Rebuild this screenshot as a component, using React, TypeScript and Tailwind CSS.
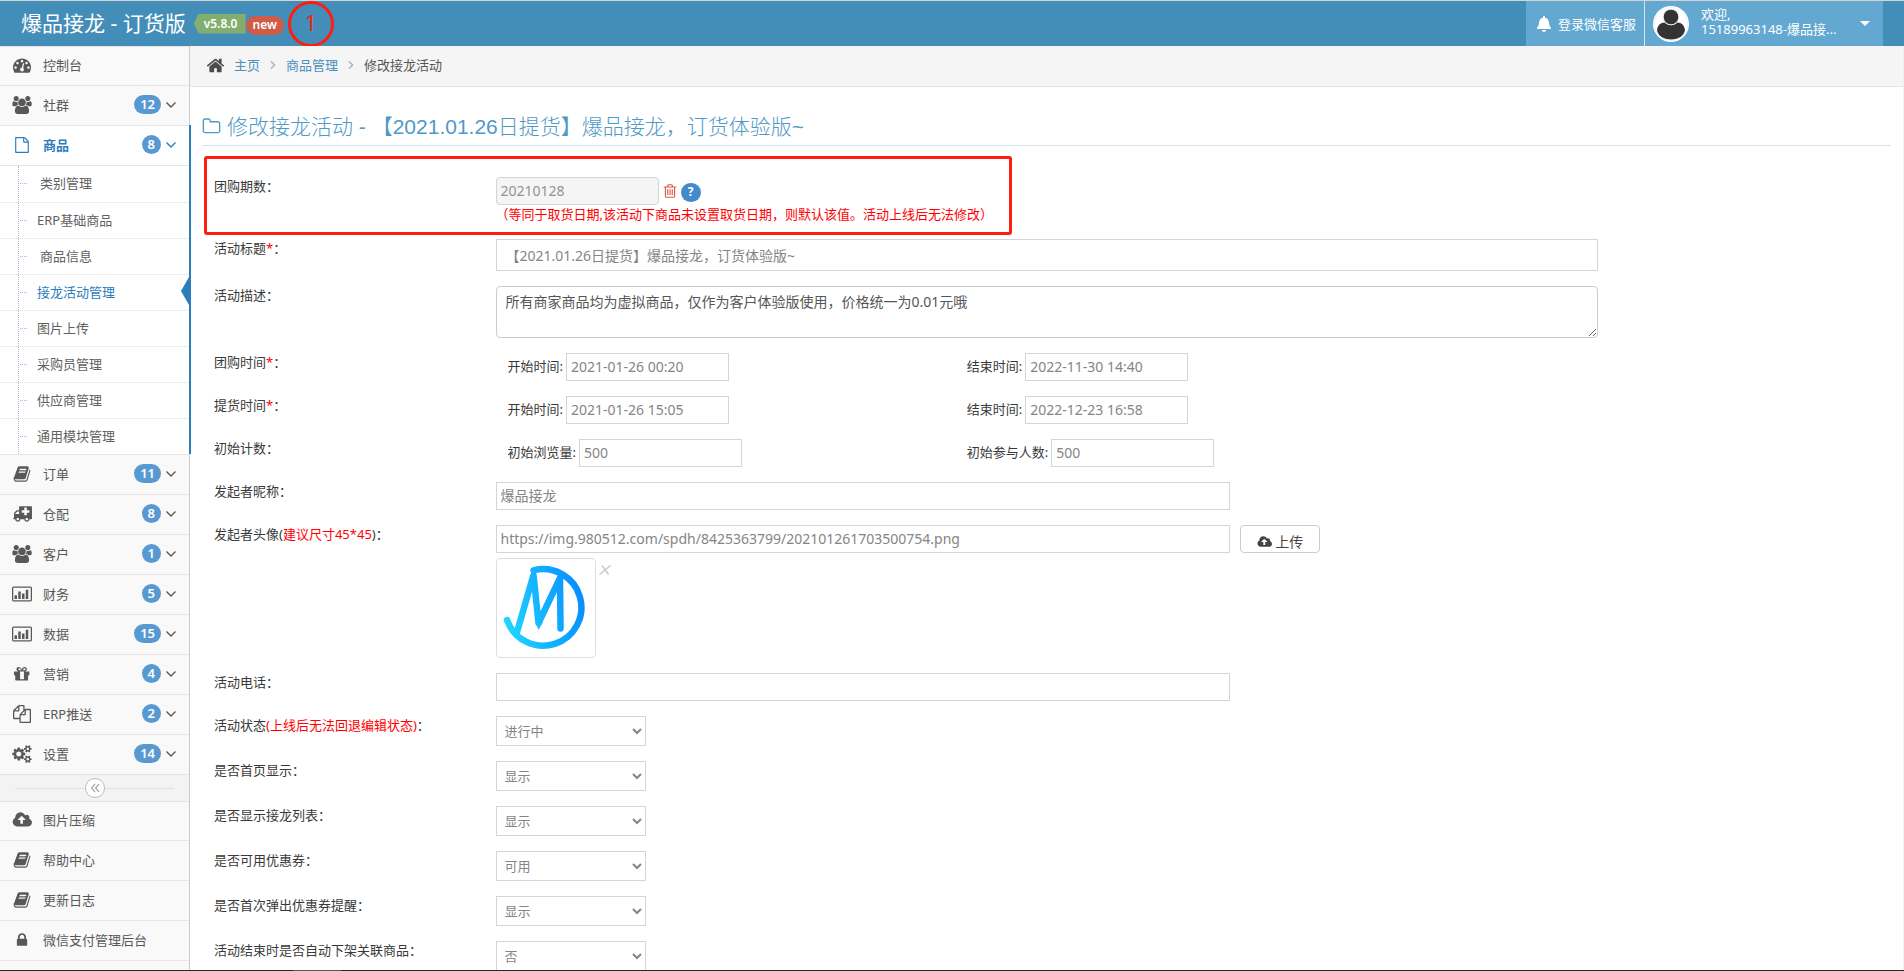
import React from 'react';
import { FaBell } from 'react-icons/fa';

// Font Awesome 4 outlines, all drawn on a 1792 unit em
const ICONS = {
  dashboard: 'M384 1152q0-53-37.5-90.5t-90.5-37.5-90.5 37.5-37.5 90.5 37.5 90.5 90.5 37.5 90.5-37.5 37.5-90.5zm192-448q0-53-37.5-90.5t-90.5-37.5-90.5 37.5-37.5 90.5 37.5 90.5 90.5 37.5 90.5-37.5 37.5-90.5zm428 481l101-382q6-26-7.5-48.5t-38.5-29.5-48 6.5-30 39.5l-101 382q-60 5-107 43.5t-63 98.5q-20 77 20 146t117 89 146-20 89-117q16-60-6-117t-72-91zm660-33q0-53-37.5-90.5t-90.5-37.5-90.5 37.5-37.5 90.5 37.5 90.5 90.5 37.5 90.5-37.5 37.5-90.5zm-640-640q0-53-37.5-90.5t-90.5-37.5-90.5 37.5-37.5 90.5 37.5 90.5 90.5 37.5 90.5-37.5 37.5-90.5zm448 192q0-53-37.5-90.5t-90.5-37.5-90.5 37.5-37.5 90.5 37.5 90.5 90.5 37.5 90.5-37.5 37.5-90.5zm320 448q0 261-141 483-19 29-54 29h-1402q-35 0-54-29-141-221-141-483 0-182 71-348t191-286 286-191 348-71 348 71 286 191 191 286 71 348z',
  group: 'M593 896q-162 5-265 128h-134q-82 0-138-40.5t-56-118.5q0-353 124-353 6 0 43.5 21t97.5 42.5 119 21.5q67 0 133-23-5 37-5 66 0 159 93 256zm1071 637q0 120-73 189.5t-194 69.5h-874q-121 0-194-69.5t-73-189.5q0-53 3.5-103.5t14-109 26.5-108.5 43-97.5 62-81 85.5-53.5 111.5-20q10 0 43 21.5t73 48 107 48 135 21.5 135-21.5 107-48 73-48 43-21.5q61 0 111.5 20t85.5 53.5 62 81 43 97.5 26.5 108.5 14 109 3.5 103.5zm-1024-1277q0 106-75 181t-181 75-181-75-75-181 75-181 181-75 181 75 75 181zm704 384q0 159-112.5 271.5t-271.5 112.5-271.5-112.5-112.5-271.5 112.5-271.5 271.5-112.5 271.5 112.5 112.5 271.5zm576 225q0 78-56 118.5t-138 40.5h-134q-103-123-265-128 93-97 93-256 0-29-5-66 66 23 133 23 59 0 119-21.5t97.5-42.5 43.5-21q124 0 124 353zm-128-609q0 106-75 181t-181 75-181-75-75-181 75-181 181-75 181 75 75 181z',
  file: 'M1596 380q28 28 48 76t20 88v1152q0 40-28 68t-68 28h-1344q-40 0-68-28t-28-68v-1600q0-40 28-68t68-28h896q40 0 88 20t76 48zm-444-244v376h376q-10-29-22-41l-313-313q-12-12-41-22zm384 1528v-1024h-416q-40 0-68-28t-28-68v-416h-768v1536h1280z',
  book: 'M1639 478q40 57 18 129l-275 906q-19 64-76.5 107.5t-122.5 43.5h-923q-77 0-148.5-53.5t-99.5-131.5q-24-67-2-127 0-4 3-27t4-37q1-8-3-21.5t-3-19.5q2-11 8-21t16.5-23.5 16.5-23.5q23-38 45-91.5t30-91.5q3-10 .5-30t-.5-28q3-11 17-28t17-23q21-36 42-92t25-90q1-9-2.5-32t.5-28q4-13 22-30.5t22-22.5q19-26 42.5-84.5t27.5-96.5q1-8-3-25.5t-2-26.5q2-8 9-18t18-23 17-21q8-12 16.5-30.5t15-35 16-36 19.5-32 26.5-23.5 36-11.5 47.5 5.5l-1 3q38-9 51-9h761q74 0 114 56t18 130l-274 906q-36 119-71.5 153.5t-128.5 34.5h-869q-27 0-38 15-11 16-1 43 24 70 144 70h923q29 0 56-15.5t35-41.5l300-987q7-22 5-57 38 15 59 43zm-1064 2q-4 13 2 22.5t20 9.5h608q13 0 25.5-9.5t16.5-22.5l21-64q4-13-2-22.5t-20-9.5h-608q-13 0-25.5 9.5t-16.5 22.5zm-83 256q-4 13 2 22.5t20 9.5h608q13 0 25.5-9.5t16.5-22.5l21-64q4-13-2-22.5t-20-9.5h-608q-13 0-25.5 9.5t-16.5 22.5z',
  ambulance: 'M704 1408q0-52-38-90t-90-38-90 38-38 90 38 90 90 38 90-38 38-90zm-384-512h384v-256h-158q-14 2-22 9l-195 195q-7 12-9 22v30zm1280 512q0-52-38-90t-90-38-90 38-38 90 38 90 90 38 90-38 38-90zm128-672v-192q0-14-9-23t-23-9h-224v-224q0-14-9-23t-23-9h-192q-14 0-23 9t-9 23v224h-224q-14 0-23 9t-9 23v192q0 14 9 23t23 9h224v224q0 14 9 23t23 9h192q14 0 23-9t9-23v-224h224q14 0 23-9t9-23zm256-480v1088q0 26-19 45t-45 19h-192q0 106-75 181t-181 75-181-75-75-181h-384q0 106-75 181t-181 75-181-75-75-181h-128q-26 0-45-19t-19-45 19-45 45-19v-416q0-26 13-58t32-51l198-198q19-19 51-32t58-13h160v-320q0-26 19-45t45-19h1152q26 0 45 19t19 45z',
  chart: 'M160 128h1728q66 0 113 47t47 113v1216q0 66-47 113t-113 47h-1728q-66 0-113-47t-47-113v-1216q0-66 47-113t113-47zm0 128q-32 0-32 32v1216q0 32 32 32h1728q32 0 32-32v-1216q0-32-32-32zM256 1024h256v384h-256zM640 640h256v768h-256zM1024 832h256v576h-256zM1408 448h256v960h-256z',
  gift: 'M1088 1356v-716h-384v716q0 25 18 38.5t46 13.5h256q28 0 46-13.5t18-38.5zm-456-844h195l-126-161q-26-31-69-31-40 0-68 28t-28 68 28 68 68 28zm624-96q0-40-28-68t-68-28q-43 0-69 31l-125 161h194q40 0 68-28t28-68zm376 256v320q0 14-9 23t-23 9h-96v416q0 40-28 68t-68 28h-1088q-40 0-68-28t-28-68v-416h-96q-14 0-23-9t-9-23v-320q0-14 9-23t23-9h440q-93 0-158.5-65.5t-65.5-158.5 65.5-158.5 158.5-65.5q107 0 168 77l128 165 128-165q61-77 168-77 93 0 158.5 65.5t65.5 158.5-65.5 158.5-158.5 65.5h440q14 0 23 9t9 23z',
  copy: 'M1696 384q40 0 68 28t28 68v1216q0 40-28 68t-68 28h-960q-40 0-68-28t-28-68v-288h-544q-40 0-68-28t-28-68v-672q0-40 20-88t48-76l408-408q28-28 76-48t88-20h416q40 0 68 28t28 68v328q68-40 128-40h416zm-544 213l-299 299h299v-299zm-640-384l-299 299h299v-299zm196 647l316-316v-416h-384v416q0 40-28 68t-68 28h-416v640h512v-256q0-40 20-88t48-76zm956 804v-1152h-384v416q0 40-28 68t-68 28h-416v640h896z',
  cogs: 'M896 896q0-106-75-181t-181-75-181 75-75 181 75 181 181 75 181-75 75-181zm768 512q0-52-38-90t-90-38-90 38-38 90q0 53 37.5 90.5t90.5 37.5 90.5-37.5 37.5-90.5zm0-1024q0-52-38-90t-90-38-90 38-38 90q0 53 37.5 90.5t90.5 37.5 90.5-37.5 37.5-90.5zm-384 421v185q0 10-7 19.5t-16 10.5l-155 24q-11 35-32 76 34 48 90 115 7 11 7 20 0 12-7 19-23 30-82.5 89.5t-78.5 59.5q-11 0-21-7l-115-90q-37 19-77 31-11 108-23 155-7 24-30 24h-186q-11 0-20-7.5t-10-17.5l-23-153q-34-10-75-31l-118 89q-7 7-20 7-11 0-21-8-144-133-144-160 0-9 7-19 10-14 41-53t47-61q-23-44-35-82l-152-24q-10-1-17-9.5t-7-19.5v-185q0-10 7-19.5t16-10.5l155-24q11-35 32-76-34-48-90-115-7-11-7-20 0-12 7-20 22-30 82-89t79-59q11 0 21 7l115 90q34-18 77-32 11-108 23-154 7-24 30-24h186q11 0 20 7.5t10 17.5l23 153q34 10 75 31l118-89q8-7 20-7 11 0 21 8 144 133 144 160 0 8-7 19-12 16-42 54t-45 60q23 48 34 82l152 23q10 2 17 10.5t7 19.5zm640 533v140q0 16-149 31-12 27-30 52 51 113 51 138 0 4-4 7-122 71-124 71-8 0-46-47t-52-68q-20 2-30 2t-30-2q-14 21-52 68t-46 47q-2 0-124-71-4-3-4-7 0-25 51-138-18-25-30-52-149-15-149-31v-140q0-16 149-31 13-29 30-52-51-113-51-138 0-4 4-7 4-2 35-20t59-34 30-16q8 0 46 46.5t52 67.5q20-2 30-2t30 2q51-71 92-112l6-2q4 0 124 70 4 3 4 7 0 25-51 138 17 23 30 52 149 15 149 31zm0-1024v140q0 16-149 31-12 27-30 52 51 113 51 138 0 4-4 7-122 71-124 71-8 0-46-47t-52-68q-20 2-30 2t-30-2q-14 21-52 68t-46 47q-2 0-124-71-4-3-4-7 0-25 51-138-18-25-30-52-149-15-149-31v-140q0-16 149-31 13-29 30-52-51-113-51-138 0-4 4-7 4-2 35-20t59-34 30-16q8 0 46 46.5t52 67.5q20-2 30-2t30 2q51-71 92-112l6-2q4 0 124 70 4 3 4 7 0 25-51 138 17 23 30 52 149 15 149 31z',
  cloud: 'M1344 864q0-14-9-23l-352-352q-9-9-23-9t-23 9l-351 351q-10 12-10 24 0 14 9 23t23 9h224v352q0 13 9.5 22.5t22.5 9.5h192q13 0 22.5-9.5t9.5-22.5v-352h224q13 0 22.5-9.5t9.5-22.5zm640 288q0 159-112.5 271.5t-271.5 112.5h-1088q-185 0-316.5-131.5t-131.5-316.5q0-130 70-240t188-165q-2-30-2-43 0-212 150-362t362-150q156 0 285.5 87t188.5 231q71-62 166-62 106 0 181 75t75 181q0 76-41 138 130 31 213.5 135.5t83.5 238.5z',
  lock: 'M640 768h512v-192q0-106-75-181t-181-75-181 75-75 181v192zm832 96v576q0 40-28 68t-68 28h-960q-40 0-68-28t-28-68v-576q0-40 28-68t68-28h32v-192q0-184 132-316t316-132 316 132 132 316v192h32q40 0 68 28t28 68z',
  home: 'M1472 992v480q0 26-19 45t-45 19h-384v-384h-256v384h-384q-26 0-45-19t-19-45v-480q0-1 .5-3t.5-3l575-474 575 474q1 2 1 6zm223-69l-62 74q-8 9-21 11h-3q-13 0-21-7l-692-577-692 577q-12 8-24 7-13-2-21-11l-62-74q-8-10-7-23.5t11-21.5l719-599q32-26 76-26t76 26l244 204v-195q0-14 9-23t23-9h192q14 0 23 9t9 23v408l219 182q10 8 11 21.5t-7 23.5z',
  folder: 'M1600 1312v-704q0-40-28-68t-68-28h-704q-40 0-68-28t-28-68v-64q0-40-28-68t-68-28h-320q-40 0-68 28t-28 68v960q0 40 28 68t68 28h1216q40 0 68-28t28-68zm128-704v704q0 92-66 158t-158 66h-1216q-92 0-158-66t-66-158v-960q0-92 66-158t158-66h320q92 0 158 66t66 158v32h672q92 0 158 66t66 158z',
  trash: 'M704 736v576q0 14-9 23t-23 9h-64q-14 0-23-9t-9-23v-576q0-14 9-23t23-9h64q14 0 23 9t9 23zm256 0v576q0 14-9 23t-23 9h-64q-14 0-23-9t-9-23v-576q0-14 9-23t23-9h64q14 0 23 9t9 23zm256 0v576q0 14-9 23t-23 9h-64q-14 0-23-9t-9-23v-576q0-14 9-23t23-9h64q14 0 23 9t9 23zm128 724v-948h-896v948q0 22 7 40.5t14.5 27 10.5 8.5h832q3 0 10.5-8.5t14.5-27 7-40.5zm-672-1076h448l-48-117q-7-9-17-11h-317q-10 2-17 11zm928 32v64q0 14-9 23t-23 9h-96v948q0 83-47 143.5t-113 60.5h-832q-66 0-113-58.5t-47-141.5v-952h-96q-14 0-23-9t-9-23v-64q0-14 9-23t23-9h309l70-167q15-37 54-63t79-26h320q40 0 79 26t54 63l70 167h309q14 0 23 9t9 23z',
};

type IconName = keyof typeof ICONS;

const ICON_WIDTH: Partial<Record<IconName, number>> = {
  group: 1920,
  ambulance: 1984,
  chart: 2048,
  cogs: 1920,
  cloud: 1984,
  book: 1664,
};

const Icon = ({ name, className }: { name: IconName; className: string }) => (
  <svg viewBox={`0 0 ${ICON_WIDTH[name] ?? 1792} 1792`} className={className} fill="currentColor" fillRule={name === 'chart' ? 'evenodd' : 'nonzero'} aria-hidden="true">
    <path d={ICONS[name]} />
  </svg>
);

interface MenuItem {
  icon: IconName;
  label: string;
  count?: number;
}

const TOP_MENU: MenuItem[] = [
  { icon: 'group', label: '社群', count: 12 },
];

const GOODS_MENU = ['类别管理', 'ERP基础商品', '商品信息', '接龙活动管理', '图片上传', '采购员管理', '供应商管理', '通用模块管理'];

const MAIN_MENU: MenuItem[] = [
  { icon: 'book', label: '订单', count: 11 },
  { icon: 'ambulance', label: '仓配', count: 8 },
  { icon: 'group', label: '客户', count: 1 },
  { icon: 'chart', label: '财务', count: 5 },
  { icon: 'chart', label: '数据', count: 15 },
  { icon: 'gift', label: '营销', count: 4 },
  { icon: 'copy', label: 'ERP推送', count: 2 },
  { icon: 'cogs', label: '设置', count: 14 },
];

const EXTRA_MENU: MenuItem[] = [
  { icon: 'book', label: '帮助中心' },
  { icon: 'book', label: '更新日志' },
  { icon: 'lock', label: '微信支付管理后台' },
];

const SidebarLink = ({ item, active, first }: { item: MenuItem; active?: boolean; first?: boolean }) => (
  <a
    href="#"
    className={`flex items-center pr-[13px] pb-[2px] shrink-0 ${first ? 'h-[39px]' : 'h-10'} border-t border-[#e5e5e5] ${
      active ? 'bg-white text-[#2b7dbc] font-semibold' : 'bg-[#f9f9f9] text-[#585858]'
    }`}
  >
    <span className="w-[43px] flex justify-center">
      <Icon name={item.icon} className={item.icon === 'file' || item.icon === 'lock' ? 'h-4 w-5' : 'h-[18px] w-5'} />
    </span>
    <span className="flex-1">{item.label}</span>
    {item.count !== undefined && (
      <>
        <span className="h-[19px] min-w-[19px] px-[6px] rounded-full bg-[#5899d2] text-white text-[13px] leading-[18px] font-semibold text-center">
          {item.count}
        </span>
        <svg viewBox="0 0 10 6" className="w-[10px] h-[6px] ml-[5px]" fill="none" stroke="currentColor" strokeWidth="1.4" aria-hidden="true">
          <path d="M.5.5 5 5 9.5.5" />
        </svg>
      </>
    )}
  </a>
);

const Sidebar = () => (
  <nav className="w-[190px] shrink-0 flex flex-col border-r border-[#ccc] bg-[#f9f9f9]">
    <SidebarLink item={{ icon: 'dashboard', label: '控制台' }} first />
    {TOP_MENU.map((item) => (
      <SidebarLink key={item.label} item={item} />
    ))}
    <div className="relative bg-white">
      <SidebarLink item={{ icon: 'file', label: '商品', count: 8 }} active />
      <ul className="relative border-t border-[#e5e5e5]">
        {GOODS_MENU.map((label, i) => {
          const current = label === '接龙活动管理';
          const indented = i === 0 || i === 2;
          return (
            <li key={label} className={`relative h-9 ${i > 0 ? 'border-t border-dotted border-[#ddd]' : ''}`}>
              <a href="#" className={`flex h-full items-center pb-[2px] ${indented ? 'pl-10' : 'pl-[37px]'} ${current ? 'text-[#2b7dbc]' : 'text-[#616161]'}`}>
                {label}
              </a>
              <span className="absolute left-5 top-[17px] w-[7px] border-t border-dotted border-[#9dbdd6]" />
              {current && (
                <span className="absolute right-0 top-[2px] h-7 w-2 bg-[#2b7dbc] [clip-path:polygon(100%_0,0_50%,100%_100%)]" />
              )}
            </li>
          );
        })}
        <span className="absolute left-[18px] inset-y-0 border-l border-dotted border-[#9dbdd6]" />
      </ul>
      <span className="absolute -right-[2px] top-0 bottom-0 w-[2px] bg-[#2b7dbc]" />
    </div>
    {MAIN_MENU.map((item) => (
      <SidebarLink key={item.label} item={item} />
    ))}
    <div className="h-[27px] shrink-0 border-t border-[#e5e5e5] bg-[#f3f3f3] flex items-center px-[15px]">
      <span className="flex-1 h-px bg-[#e0e0e0]" />
      <button type="button" aria-label="收起菜单" className="size-5 rounded-full border border-[#bbb] bg-white flex items-center justify-center text-[#aaa]">
        <svg viewBox="0 0 10 10" className="size-[10px]" fill="none" stroke="currentColor" strokeWidth="1.2" aria-hidden="true">
          <path d="M5 1 1.500 5 5 9M9 1 5.500 5 9 9" />
        </svg>
      </button>
      <span className="flex-1 h-px bg-[#e0e0e0]" />
    </div>
    <SidebarLink item={{ icon: 'cloud', label: '图片压缩' }} first />
    {EXTRA_MENU.map((item) => (
      <SidebarLink key={item.label} item={item} />
    ))}
    <div className="border-t border-[#e5e5e5]" />
  </nav>
);

const Header = () => (
  <header className="h-[46px] shrink-0 flex items-stretch border-t border-[#d4d4d4] bg-[#438eb9] text-white">
    <div className="flex items-center pl-[21px]">
      <a href="#" className="text-[21px] leading-none">爆品接龙 - 订货版</a>
      <span className="ml-2 h-5 w-[52px] pl-[10px] bg-[#82af6f] text-xs leading-5 font-semibold [clip-path:polygon(5px_0,100%_0,100%_100%,5px_100%,0_50%)]">
        v5.8.0
      </span>
      <span className="mt-[3px] h-[19px] w-[38px] rounded-full bg-[#d15b47] text-xs leading-[17px] font-semibold text-center">new</span>
      <span className="ml-1 size-[46px] -my-1 rounded-full border-[3px] border-[#fe1d10] flex items-center justify-center text-[21px] leading-none text-[#fe1d10]">
        1
      </span>
    </div>
    <div className="ml-auto mr-[21px] flex">
      <a href="#" className="flex items-center gap-[6px] w-[118px] pl-[10px] bg-[#62a8d1]">
        <FaBell className="size-4" />
        登录微信客服
      </a>
      <button type="button" className="flex items-center w-[239px] pl-2 pr-[13px] bg-[#62a8d1] border-l border-[#e1e1e1] text-left">
        <svg viewBox="0 0 36 36" className="size-9" aria-hidden="true">
          <circle cx="18" cy="18" r="18" fill="#fff" />
          <circle cx="18" cy="18" r="16.500" fill="none" stroke="#dcebf5" strokeWidth=".6" />
          <path d="M4 24c.5-4.500 3.500-7.500 7.500-7.500 4 3.700 9 3.700 13 0 4 0 7 3 7.500 7.500C31.500 29 26 33.500 18 33.500S4.500 29 4 24z" fill="#333" />
          <circle cx="18" cy="11" r="7.800" fill="#333" stroke="#fff" strokeWidth=".8" />
        </svg>
        <span className="ml-3 pb-[3px] leading-[15px]">
          欢迎,<br />15189963148-爆品接...
        </span>
        <span className="ml-auto border-x-[5px] border-t-[5px] border-x-transparent border-t-white" />
      </button>
    </div>
  </header>
);

const FIELD = 'h-7 border border-[#d5d5d5] bg-white px-1 pb-[2px] text-sm text-[#858585] outline-none focus:border-[#f59942]';

const Row = ({ label, htmlFor, children }: { label: React.ReactNode; htmlFor?: string; children: React.ReactNode }) => (
  <div className="grid grid-cols-12 mb-[15px]">
    <label htmlFor={htmlFor} className="col-span-2 px-3 leading-[18px]">{label}</label>
    <div className="col-span-8 px-3">{children}</div>
  </div>
);

const Pair = ({ items }: { items: { id: string; label: string; value: string }[] }) => (
  <div className="grid grid-cols-12">
    {items.map((it) => (
      <div key={it.id} className="col-span-5 px-3 flex items-center gap-[3px]">
        <label htmlFor={it.id} className="pb-[2px]">{it.label}:</label>
        <input id={it.id} defaultValue={it.value} className={`${FIELD} w-[163px]`} />
      </div>
    ))}
  </div>
);

const SELECTS = [
  { id: 'status', label: <>活动状态<span className="text-[#f00]">(上线后无法回退编辑状态)</span>：</>, options: ['进行中', '已结束'] },
  { id: 'home', label: '是否首页显示：', options: ['显示', '隐藏'] },
  { id: 'list', label: '是否显示接龙列表：', options: ['显示', '隐藏'] },
  { id: 'coupon', label: '是否可用优惠券：', options: ['可用', '不可用'] },
  { id: 'popup', label: '是否首次弹出优惠券提醒：', options: ['显示', '隐藏'] },
  { id: 'offline', label: '活动结束时是否自动下架关联商品：', options: ['否', '是'] },
];

const AvatarPreview = () => (
  <svg viewBox="1 1 98 98" className="size-[100px] rounded-[4px] border border-[#ddd]" fill="none" role="img" aria-label="头像">
    <defs>
      <linearGradient id="logo" gradientUnits="userSpaceOnUse" x1="8" y1="60" x2="90" y2="40">
        <stop offset="0" stopColor="#20d6ff" />
        <stop offset="1" stopColor="#068bff" />
      </linearGradient>
    </defs>
    <g stroke="url(#logo)" strokeWidth="6.500" strokeLinecap="round" strokeLinejoin="round">
      <path d="M37.500 12.400A38.250 38.250 0 1 1 11 62" />
      <path d="M21 74 37.500 17 42.500 65 64 20 64.500 70.500" />
    </g>
    <path d="M39.200 62 42.300 72 47 64z" fill="url(#logo)" />
  </svg>
);

const Star = () => <span className="text-[#f00]">*</span>;

export default function App() {
  return (
    <div
      lang="zh-CN"
      className="h-screen flex flex-col overflow-hidden bg-white text-[13px] leading-5 text-[#393939] font-['Noto_Sans','Noto_Sans_CJK_SC',sans-serif]"
    >
      <Header />
      <div className="flex flex-1 min-h-0 overflow-hidden">
        <Sidebar />
        <main className="flex-1 min-w-0">
          <nav className="flex items-center h-[41px] pl-4 pb-[2px] border-b border-[#e5e5e5] bg-[#f5f5f5]">
            <Icon name="home" className="size-[19px] mr-[9px] text-[#4c4c4c]" />
            <a href="#" className="text-[#4c8fbd]">主页</a>
            <Separator />
            <a href="#" className="text-[#4c8fbd]">商品管理</a>
            <Separator />
            <span className="text-[#555]">修改接龙活动</span>
          </nav>

          <div className="relative px-3 pt-6">
            <h1 className="flex items-center h-[35px] pb-[3px] border-b border-[#d5e3ef] text-[21px] font-light text-[#4f99c6] font-['Liberation_Sans','Noto_Sans_CJK_SC',sans-serif]">
              <Icon name="folder" className="size-[19px] mr-[6px]" />
              修改接龙活动 - 【2021.01.26日提货】爆品接龙，订货体验版~
            </h1>

            <form className="pt-[31px]">
              <Row label="团购期数：" htmlFor="period">
                <div className="flex items-center h-7">
                  <input id="period" disabled defaultValue="20210128" className="h-7 w-[163px] rounded-[4px] border border-[#d5d5d5] bg-[#f5f5f5] px-1 pb-[2px] text-sm text-[#939393]" />
                  <button type="button" aria-label="清除" className="ml-[3px] text-[#dd5a43]">
                    <Icon name="trash" className="size-4" />
                  </button>
                  <button type="button" className="ml-[3px] mt-[2px] w-5 h-[19px] rounded-full bg-[#428bca] text-xs leading-[18px] font-bold text-white">?</button>
                </div>
                <p className="text-[#f00] leading-[19px]">（等同于取货日期,该活动下商品未设置取货日期，则默认该值。活动上线后无法修改）</p>
              </Row>
              <Row label={<>活动标题<Star />：</>} htmlFor="title">
                <input id="title" defaultValue="【2021.01.26日提货】爆品接龙，订货体验版~" className="block h-8 w-full border border-[#d5d5d5] px-[9px] text-sm text-[#858585] outline-none" />
              </Row>
              <Row label="活动描述：" htmlFor="desc">
                <textarea id="desc" defaultValue="所有商家商品均为虚拟商品，仅作为客户体验版使用，价格统一为0.01元哦" className="block h-[52px] w-full rounded-[4px] border border-[#ccc] px-[9px] py-[5px] text-sm leading-5 text-[#555] outline-none" />
              </Row>
              <Row label={<>团购时间<Star />：</>}>
                <Pair items={[{ id: 'buy-start', label: '开始时间', value: '2021-01-26 00:20' }, { id: 'buy-end', label: '结束时间', value: '2022-11-30 14:40' }]} />
              </Row>
              <Row label={<>提货时间<Star />：</>}>
                <Pair items={[{ id: 'pick-start', label: '开始时间', value: '2021-01-26 15:05' }, { id: 'pick-end', label: '结束时间', value: '2022-12-23 16:58' }]} />
              </Row>
              <Row label="初始计数：">
                <Pair items={[{ id: 'views', label: '初始浏览量', value: '500' }, { id: 'joined', label: '初始参与人数', value: '500' }]} />
              </Row>
              <Row label="发起者昵称：" htmlFor="nick">
                <input id="nick" defaultValue="爆品接龙" className={`${FIELD} block w-2/3`} />
              </Row>
              <Row label={<>发起者头像(<span className="text-[#f00]">建议尺寸45*45</span>)：</>} htmlFor="avatar">
                <div className="flex gap-[10px]">
                  <input id="avatar" defaultValue="https://img.980512.com/spdh/8425363799/202101261703500754.png" className={`${FIELD} block w-2/3`} />
                  <button type="button" className="flex items-center justify-center gap-[3px] h-7 w-20 pt-[5px] rounded-[4px] border border-[#ccc] bg-white text-sm text-[#444]">
                    <Icon name="cloud" className="w-[15px] h-[14px]" />
                    上传
                  </button>
                </div>
                <div className="flex items-start mt-[5px] gap-[3px]">
                  <AvatarPreview />
                  <button type="button" aria-label="删除头像" className="mt-[7px] text-[#ccc]">
                    <svg viewBox="0 0 12 10" className="w-3 h-[10px]" fill="none" stroke="currentColor" strokeWidth="1.600" aria-hidden="true">
                      <path d="M3 .5 9.500 9.500M11.500.5.5 9.500" />
                    </svg>
                  </button>
                </div>
              </Row>
              <Row label="活动电话：" htmlFor="phone">
                <input id="phone" className={`${FIELD} block w-2/3`} />
              </Row>
              {SELECTS.map((s) => (
                <Row key={s.id} label={s.label} htmlFor={s.id}>
                  <select id={s.id} className="block h-[30px] w-[150px] border border-[#d5d5d5] bg-white px-1 text-[13px] text-[#858585]">
                    {s.options.map((o) => (
                      <option key={o}>{o}</option>
                    ))}
                  </select>
                </Row>
              ))}
            </form>

            {/* highlight frame over the period row */}
            <div className="absolute left-[14px] top-[69px] w-[808px] h-[79px] border-[3px] border-[#fe1d10] rounded-[3px] pointer-events-none" />
          </div>
        </main>
        <div className="w-px bg-[#f0f0f0]" />
      </div>
      <div className="h-px shrink-0 bg-[#1c2b30] pl-[293px]">
        <div className="h-px w-12 bg-[#4d595d]" />
      </div>
    </div>
  );
}

function Separator() {
  return (
    <svg viewBox="0 0 6 8" className="w-[6px] h-2 mx-[10px]" fill="none" stroke="#b2b6bf" strokeWidth="1.600" aria-hidden="true">
      <path d="M1 .5 4.500 4 1 7.500" />
    </svg>
  );
}
